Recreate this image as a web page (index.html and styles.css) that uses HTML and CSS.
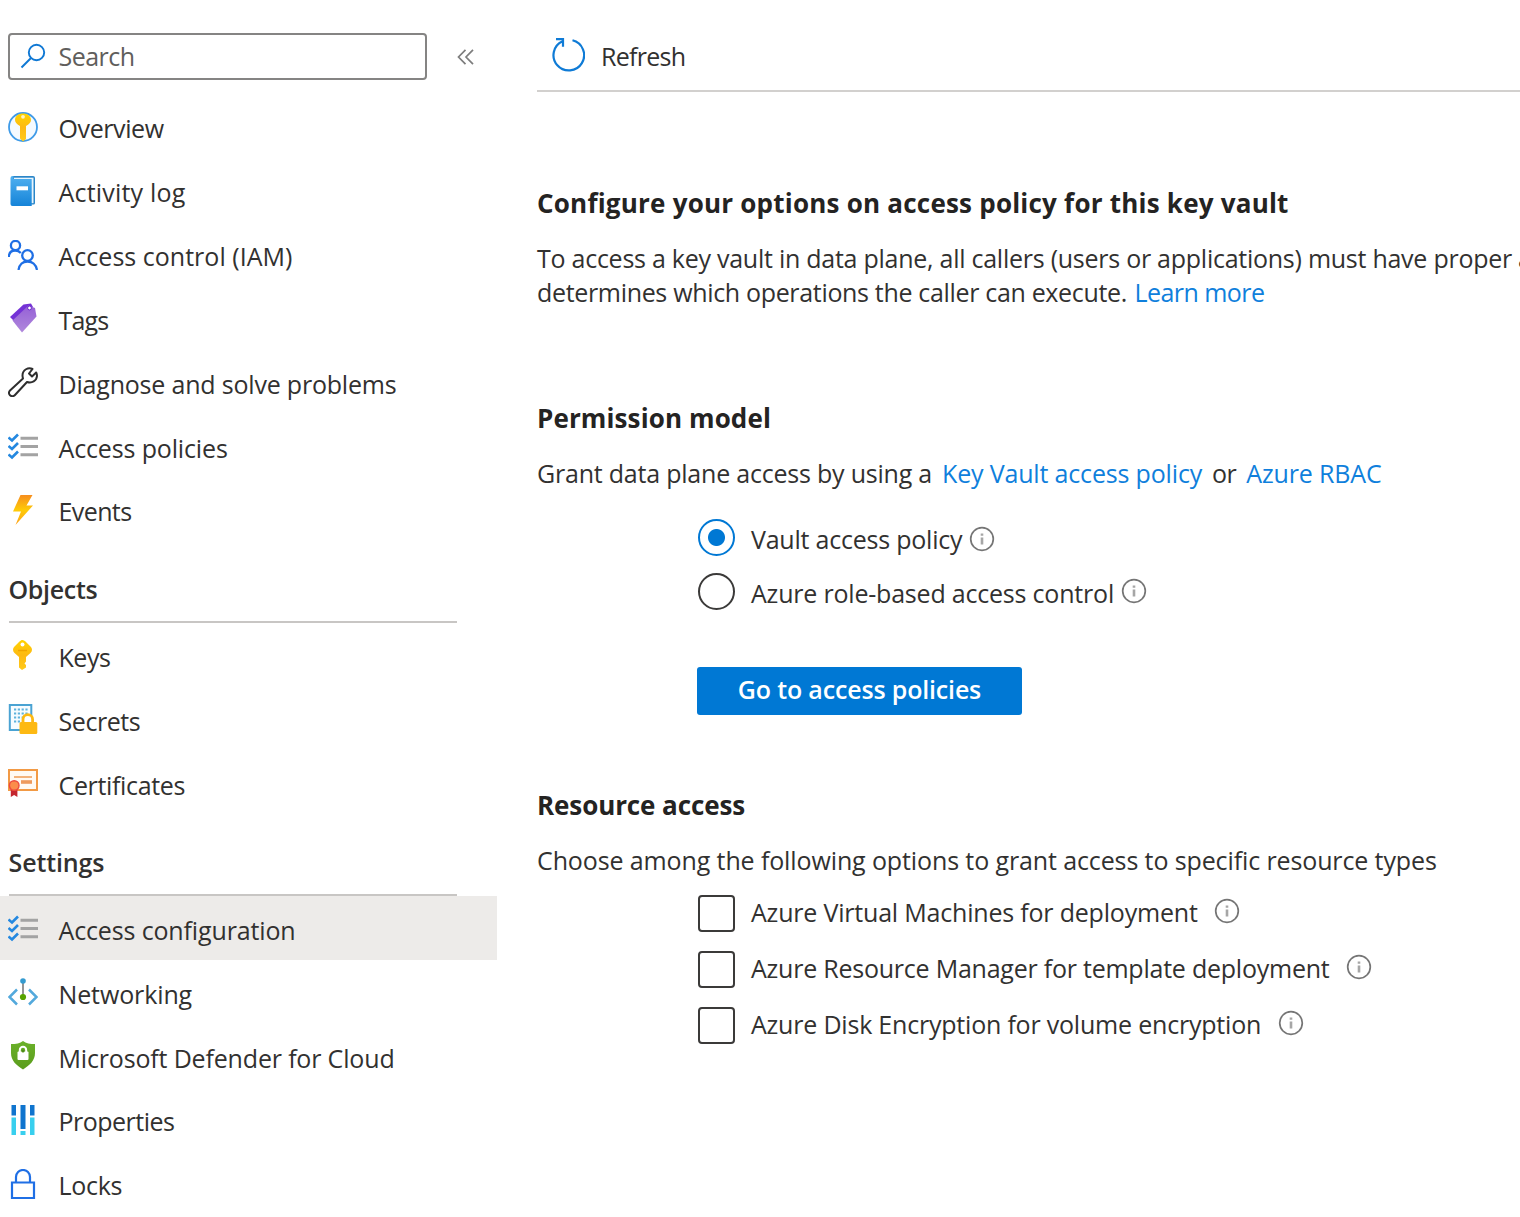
FILE: index.html
```html
<!DOCTYPE html>
<html lang="en">
<head>
<meta charset="utf-8">
<title>Key vault - Access configuration</title>
<link rel="stylesheet" href="styles.css">
</head>
<body>
<svg class="defs" width="0" height="0" aria-hidden="true">
  <defs>
    <linearGradient id="gold" x1="0" y1="0" x2="0" y2="1"><stop offset="0" stop-color="#ffd400"/><stop offset=".5" stop-color="#fdb913"/><stop offset="1" stop-color="#ffca1a"/></linearGradient>
    <linearGradient id="book" x1="0" y1="0" x2="0" y2="1"><stop offset="0" stop-color="#50b0f0"/><stop offset="1" stop-color="#1583d8"/></linearGradient>
    <linearGradient id="tag" x1="0" y1="0" x2="0" y2="1"><stop offset="0" stop-color="#9560d6"/><stop offset="1" stop-color="#b088dc"/></linearGradient>
    <linearGradient id="bolt" x1="0" y1="0" x2="0" y2="1"><stop offset="0" stop-color="#f78d1e"/><stop offset=".5" stop-color="#fecb07"/><stop offset="1" stop-color="#fea11b"/></linearGradient>
    <linearGradient id="shield" x1="0" y1="0" x2="0" y2="1"><stop offset="0" stop-color="#6bb12a"/><stop offset="1" stop-color="#5a9c1c"/></linearGradient>
    <symbol id="checklist" viewBox="0 0 30 30">
      <path d="M.500 6.500l3.500 3 6-6M.500 15l3.500 3 6-6M.500 23.500l3.500 3 6-6" fill="none" stroke="#2488e0" stroke-width="2.600"/>
      <path d="M12.500 7.200h17.500M12.500 15.600h17.500M12.500 23.800h17.500" stroke="#a3a3a3" stroke-width="3"/>
    </symbol>
    <symbol id="info" viewBox="0 0 26 26">
      <circle cx="13" cy="13" r="11.300" fill="none" stroke="#757575" stroke-width="1.700"/>
      <path d="M13 11.500v7M13 7.500v2.300" stroke="#a6a6a6" stroke-width="2.600"/>
    </symbol>
  </defs>
</svg>
<div class="page">
  <nav class="sidebar">
    <div class="search-row">
      <div class="search">
        <svg class="search-icon" viewBox="0 0 26 26"><circle cx="16.500" cy="9.500" r="7.700" fill="none" stroke="#0f78d4" stroke-width="1.900"/><path d="M11 15L1.500 24.500" stroke="#0f78d4" stroke-width="2"/></svg>
        <span class="t t-search">Search</span>
      </div>
      <svg class="collapse" viewBox="0 0 17 16"><path d="M8.500 .800L1.500 8l7 7.200M16 .800L9 8l7 7.200" fill="none" stroke="#7d7d7d" stroke-width="1.700"/></svg>
    </div>
    <a class="item"><svg class="icon" viewBox="0 0 30 30"><circle cx="15" cy="15" r="14" fill="#f4faff" stroke="#3f9be8" stroke-width="1.800"/><path d="M15 1.500c-4.500 0-8 2.500-8 6.500 0 2.300 2 4.500 5 6v12.500l3 3 3-2.500V14c3-1.500 5-3.700 5-6 0-4-3.500-6.500-8-6.500z" fill="url(#gold)"/><circle cx="15" cy="4.800" r="1.900" fill="#fff3c4"/></svg><span class="t t-overview">Overview</span></a>
    <a class="item"><svg class="icon" viewBox="0 0 30 30"><path d="M5 0h20a2 2 0 0 1 2 2v25a1.500 1.500 0 0 1-1.500 1.500H5z" fill="#2b86c8"/><path d="M6 1.700h19.500v25.500H6z" fill="#e9f5fd"/><path d="M4.500 0H5.500v3h18.200V30H4.500a2 2 0 0 1-2-2V2a2 2 0 0 1 2-2z" fill="url(#book)"/><path d="M8.500 10.300h11.500v4H8.500z" fill="#fff"/></svg><span class="t t-activity">Activity log</span></a>
    <a class="item"><svg class="icon" viewBox="0 0 30 30" fill="none" stroke="#1f6fe5" stroke-width="2.300"><circle cx="7.500" cy="5.500" r="4.600"/><path d="M.800 17c.200-4.500 3-6.500 6.500-6.500 2.500 0 4 .800 5.500 2.500"/><circle cx="19.500" cy="15.500" r="5.300"/><path d="M10.500 30c.700-5.500 4.500-8.500 9-8.500s8.500 3 9.500 8.500"/></svg><span class="t t-iam">Access control (IAM)</span></a>
    <a class="item"><svg class="icon" viewBox="0 0 30 30"><path d="M2 14L15.500 1.500 23 .500 25 4 8 20z" fill="#7432d6"/><path d="M20.500 2.500l6.500 2.500 1.500 8.500L14 29.500 4.500 17.500z" fill="url(#tag)"/><circle cx="21.500" cy="5" r="1.900" fill="#fff" stroke="#6c2bcd"/></svg><span class="t t-tags">Tags</span></a>
    <a class="item"><svg class="icon" viewBox="0 0 30 30" fill="none" stroke="#2e2e2e" stroke-width="2"><path d="M24.500 2c-4-2-10 .500-10 6.500 0 1 .200 2 .500 3L2 23.500c-1.500 1.500-1.300 3.500 0 4.800s3.500 1.300 5-.300L19 15c5 1.500 9.500-1 10-6 0-1.500-.300-2.500-.800-3.500L24 9.500l-3-3z" stroke-linejoin="round"/></svg><span class="t t-diagnose">Diagnose and solve problems</span></a>
    <a class="item"><svg class="icon"><use href="#checklist"/></svg><span class="t t-policies">Access policies</span></a>
    <a class="item"><svg class="icon" viewBox="0 0 30 30"><path d="M12.500 0H24.500l-6 10.500h6.500L7.500 30l5.500-13.500H5z" fill="url(#bolt)"/></svg><span class="t t-events">Events</span></a>
    <h2 class="group"><span class="t t-objects">Objects</span></h2>
    <a class="item"><svg class="icon" viewBox="0 0 30 30"><path d="M14.500 0c-1.200 0-2 .600-3 1.500L6.500 6.500c-2 2-2 4.500 0 6.500l4.500 4v10.500l3 2.500 4-2.500v-2.500l-1.500-1.500 1.500-2V17l4.500-4c2-2 2-4.500 0-6.500L17.500 1.500c-1-1-2-1.500-3-1.500z" fill="url(#gold)"/><circle cx="14.500" cy="4.500" r="2" fill="#fff"/><path d="M10 10.500h9" stroke="#f0a400" stroke-width="1.500"/></svg><span class="t t-keys">Keys</span></a>
    <a class="item"><svg class="icon" viewBox="0 0 30 30"><path d="M1.800 1h21.500v25H1.800z" fill="#f7fcff" stroke="#4aa3d3" stroke-width="2"/><path d="M6 5.500h14M6 9.500h14M6 13.500h10M6 17.500h6" stroke="#5fb2dc" stroke-width="1.800" stroke-dasharray="2.200 1.600"/><path d="M15 20v-4.500a4.800 4.800 0 0 1 9.600 0V20" fill="#fff" stroke="#fdb913" stroke-width="2.800"/><rect x="11.500" y="18" width="17.800" height="12" rx="1.500" fill="#fdb913"/></svg><span class="t t-secrets">Secrets</span></a>
    <a class="item"><svg class="icon" viewBox="0 0 30 30"><path d="M1 2h28v20H1z" fill="#fffaf4" stroke="#f29a45" stroke-width="2"/><path d="M6 9h18" stroke="#f3b37c" stroke-width="2"/><path d="M13 14h11" stroke="#ee9a5d" stroke-width="3.600"/><path d="M2.800 20h6.600v9l-3.300-2-3.300 2z" fill="#c4262e"/><circle cx="6.200" cy="17.500" r="4.800" fill="#fb8d4b" stroke="#ed4b3f" stroke-width="1.400"/></svg><span class="t t-certs">Certificates</span></a>
    <h2 class="group"><span class="t t-settings">Settings</span></h2>
    <a class="item selected"><svg class="icon"><use href="#checklist"/></svg><span class="t t-config">Access configuration</span></a>
    <a class="item"><svg class="icon" viewBox="0 0 30 30"><path d="M9 12.500L1.500 20l7.500 7.500M21 12.500l7.500 7.500-7.500 7.500" fill="none" stroke="#53a9dc" stroke-width="2.500"/><path d="M15 4v16" stroke="#8a8a8a" stroke-width="1.800"/><circle cx="15" cy="4" r="2.800" fill="#359bd0"/><circle cx="15" cy="20" r="3.100" fill="#57a300"/></svg><span class="t t-network">Networking</span></a>
    <a class="item"><svg class="icon" viewBox="0 0 30 30"><path d="M15 0c3 2.500 7 3 12 3v9c0 7.500-5 12-12 16.500C8 24 3 19.500 3 12V3c5 0 9-.500 12-3z" fill="url(#shield)"/><path d="M11.800 11v-2a3.200 3.200 0 0 1 6.400 0V11" fill="none" stroke="#fff" stroke-width="2"/><rect x="9.500" y="10.500" width="11" height="8.500" rx="1" fill="#fff"/><circle cx="15" cy="10" r="1.500" fill="#4d8c18"/></svg><span class="t t-defender">Microsoft Defender for Cloud</span></a>
    <a class="item"><svg class="icon" viewBox="0 0 30 30"><path d="M3.500 0h4.500v10.500H3.500zM12.500 0h5v24h-5zM22 0h4.500v10.500H22z" fill="#0f74ce"/><path d="M3.500 12.500h4.500V30H3.500zM12.500 26h5v4h-5zM22 12.500h4.500V30H22z" fill="#38cfee"/></svg><span class="t t-props">Properties</span></a>
    <a class="item"><svg class="icon" viewBox="0 0 30 30" fill="none" stroke="#1f6fe5" stroke-width="2.200"><path d="M4 13.500h22V29H4zM8 13.500V8a7 7 0 0 1 14 0v5.500"/></svg><span class="t t-locks">Locks</span></a>
  </nav>
  <main class="content">
    <div class="toolbar">
      <svg class="refresh" viewBox="0 0 34 34" fill="none" stroke="#0f7bd6" stroke-width="2.200"><path d="M11.500 3.200A15.300 15.300 0 1 0 21.500 2.300"/><path d="M5 1.200h7v7.600"/></svg>
      <span class="t t-refresh">Refresh</span>
    </div>
    <section class="intro">
      <h1 class="title"><span class="t t-title1">Configure your options on access policy for this key vault</span></h1>
      <p class="line"><span class="t t-intro1">To access a key vault in data plane, all callers (users or applications) must have proper</span><span class="tail">access</span></p>
      <p class="line"><span class="t t-intro2">determines which operations the caller can execute.</span><a class="link t t-learn">Learn more</a></p>
    </section>
    <section class="permission">
      <h1 class="title"><span class="t t-title2">Permission model</span></h1>
      <p class="line grant"><span class="t t-grant">Grant data plane access by using a</span><a class="link t t-kvpolicy">Key Vault access policy</a><span class="t t-or">or</span><a class="link t t-rbac">Azure RBAC</a></p>
      <div class="radios">
        <label class="option radio-row"><span class="radio checked"></span><span class="t t-vault">Vault access policy</span><svg class="info low"><use href="#info"/></svg></label>
        <label class="option radio-row"><span class="radio"></span><span class="t t-role">Azure role-based access control</span><svg class="info"><use href="#info"/></svg></label>
      </div>
      <button class="primary"><span class="t t-goto">Go to access policies</span></button>
    </section>
    <section class="resource">
      <h1 class="title"><span class="t t-title3">Resource access</span></h1>
      <p class="line"><span class="t t-choose">Choose among the following options to grant access to specific resource types</span></p>
      <div class="checks">
        <label class="option"><span class="box"></span><span class="t t-vm">Azure Virtual Machines for deployment</span><svg class="info"><use href="#info"/></svg></label>
        <label class="option"><span class="box"></span><span class="t t-arm">Azure Resource Manager for template deployment</span><svg class="info"><use href="#info"/></svg></label>
        <label class="option"><span class="box"></span><span class="t t-disk">Azure Disk Encryption for volume encryption</span><svg class="info"><use href="#info"/></svg></label>
      </div>
    </section>
  </main>
</div>
</body>
</html>
```
FILE: styles.css
```css
* { box-sizing: border-box; }
body {
  margin: 0;
  background: #fff;
  color: #323130;
  font: 25px/34px "Open Sans", "Noto Sans", sans-serif;
  overflow: hidden;
}
h1, h2, p { margin: 0; font-size: inherit; }
.defs { position: absolute; }
.page { display: flex; width: 1520px; height: 1217px; overflow: hidden; }
.t { white-space: nowrap; flex: none; }

.sidebar { width: 497px; flex: none; padding-top: 33px; }
.search-row { display: flex; align-items: center; margin-left: 8px; height: 47px; margin-bottom: 14.4px; }
.search {
  display: flex; align-items: center;
  width: 419px; height: 47px; padding-left: 10px;
  border: 2px solid #858483; border-radius: 4px; color: #605e5c;
}
.search-icon { width: 26px; height: 26px; margin: 0 12.5px 2px 0; }
.search .t { padding-bottom: 1px; }
.collapse { width: 17px; height: 16px; margin-left: 30px; }
.item { display: flex; align-items: center; height: 63.85px; padding-left: 8px; }
.item .t { padding-top: 4px; }
.icon { width: 30px; height: 30px; margin: 1px 20.5px 0 0; flex: none; }
.selected { background: #edebe9; }
.group {
  height: 81.6px; margin: 0 40px 0 8.5px; padding-top: 31px;
  border-bottom: 2px solid #c8c6c4; font-weight: 600;
}

.content { margin-left: 40px; width: 983px; flex: none; }
.toolbar { display: flex; align-items: center; height: 92px; padding: 20px 0 0 14px; border-bottom: 2px solid #d2d0ce; }
.toolbar .t { padding-top: 2px; }
.refresh { width: 34px; height: 34px; margin-right: 16px; }
.title { font-size: 26px; font-weight: 700; height: 34px; padding-top: 1px; margin-bottom: 22px; color: #242322; }
.line { display: flex; height: 34px; white-space: nowrap; }
.link { color: #0f7fdc; margin-left: 7.5px; }
.tail { margin-left: 6px; }
.intro { padding-top: 93px; }
.permission { padding-top: 91px; }
.grant { gap: 10px; }
.grant .link { margin-left: 0; }
.radios { padding: 20px 0 0 161px; }
.option { display: flex; align-items: center; }
.option .t { margin-left: 16px; }
.info { width: 26px; height: 26px; flex: none; }
.radio-row { height: 54px; }
.radio-row .t { padding-top: 4px; }
.radio { width: 37px; height: 37px; border: 2px solid #3b3a39; border-radius: 50%; }
.radio.checked { border-color: #0078d4; background: radial-gradient(circle, #0078d4 8px, #fff 9px); }
.radio-row .info { margin-left: 7px; }
.radio-row .low { margin-top: 4px; }
.primary {
  display: block; width: 325px; height: 48px; margin: 48.5px 0 0 160px; padding: 0 0 3px;
  border: 0; border-radius: 3px; background: #0078d4; color: #fff;
  font: 600 25px/34px "Open Sans", "Noto Sans", sans-serif;
}
.resource { padding-top: 72.5px; }
.checks { padding: 8.5px 0 0 161px; }
.checks .option { height: 56px; }
.checks .t { padding-bottom: 3px; }
.box { width: 37px; height: 37px; border: 2px solid #3b3a39; border-radius: 4px; }
.checks .info { margin: 0 0 6px 16.5px; }

/* tracking per label */
.t-search { letter-spacing: -.529px; }
.t-overview { letter-spacing: -.4px; }
.t-activity { letter-spacing: .194px; }
.t-iam { letter-spacing: .02px; }
.t-tags { letter-spacing: -.789px; }
.t-diagnose { letter-spacing: -.196px; }
.t-policies { letter-spacing: -.14px; }
.t-events { letter-spacing: -.596px; }
.t-objects { letter-spacing: -.33px; }
.t-keys { letter-spacing: -.449px; }
.t-secrets { letter-spacing: -.43px; }
.t-certs { letter-spacing: -.34px; }
.t-settings { letter-spacing: -.12px; }
.t-config { letter-spacing: -.14px; }
.t-network { letter-spacing: -.12px; }
.t-defender { letter-spacing: -.167px; }
.t-props { letter-spacing: -.503px; }
.t-locks { letter-spacing: -.3px; }
.t-refresh { letter-spacing: -.72px; }
.t-title1 { letter-spacing: .22px; }
.t-intro1 { letter-spacing: -.255px; }
.t-intro2 { letter-spacing: -.328px; }
.t-learn { letter-spacing: -.55px; }
.t-title2 { letter-spacing: .12px; }
.t-grant { letter-spacing: -.213px; }
.t-kvpolicy { letter-spacing: -.165px; }
.t-or { letter-spacing: -.5px; }
.t-rbac { letter-spacing: -.15px; }
.t-vault { letter-spacing: -.22px; }
.t-role { letter-spacing: -.2px; }
.t-goto { letter-spacing: -.17px; }
.t-title3 { letter-spacing: -.1px; }
.t-choose { letter-spacing: -.115px; }
.t-vm { letter-spacing: -.195px; }
.t-arm { letter-spacing: -.23px; }
.t-disk { letter-spacing: -.205px; }
```
